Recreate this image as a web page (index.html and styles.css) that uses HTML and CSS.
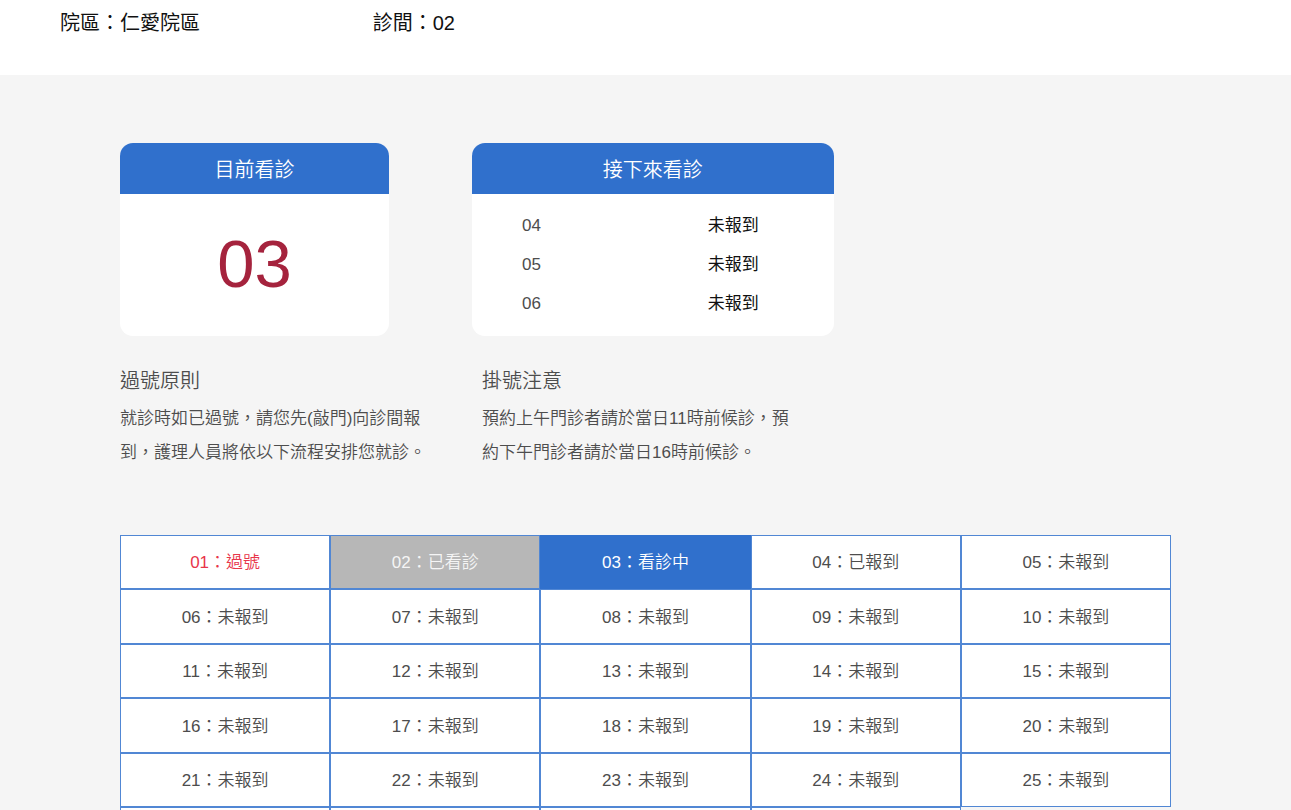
FILE: index.html
```
<!DOCTYPE html>
<html lang="zh-Hant-TW">
<head>
<meta charset="utf-8">
<meta name="viewport" content="width=device-width, initial-scale=1">
<title>看診進度</title>
<link rel="stylesheet" href="styles.css">
</head>
<body>
<header class="clinic-bar">
  <p class="clinic-item">院區：仁愛院區</p>
  <p class="clinic-item">診間：02</p>
</header>
<main class="content">
  <div class="cards">
    <section class="card">
      <h2 class="card-title">目前看診</h2>
      <p class="current-number">03</p>
    </section>
    <section class="card">
      <h2 class="card-title">接下來看診</h2>
      <table class="queue">
        <tbody>
          <tr><th scope="row">04</th><td>未報到</td></tr>
          <tr><th scope="row">05</th><td>未報到</td></tr>
          <tr><th scope="row">06</th><td>未報到</td></tr>
        </tbody>
      </table>
    </section>
  </div>
  <div class="notes">
    <section>
      <h3 class="note-title">過號原則</h3>
      <p class="note-text">就診時如已過號，請您先(敲門)向診間報到，護理人員將依以下流程安排您就診。</p>
    </section>
    <section>
      <h3 class="note-title">掛號注意</h3>
      <p class="note-text">預約上午門診者請於當日11時前候診，預約下午門診者請於當日16時前候診。</p>
    </section>
  </div>
  <ul class="slots">
    <li class="slot missed">01：過號</li>
    <li class="slot done">02：已看診</li>
    <li class="slot active">03：看診中</li>
    <li class="slot">04：已報到</li>
    <li class="slot">05：未報到</li>
    <li class="slot">06：未報到</li>
    <li class="slot">07：未報到</li>
    <li class="slot">08：未報到</li>
    <li class="slot">09：未報到</li>
    <li class="slot">10：未報到</li>
    <li class="slot">11：未報到</li>
    <li class="slot">12：未報到</li>
    <li class="slot">13：未報到</li>
    <li class="slot">14：未報到</li>
    <li class="slot">15：未報到</li>
    <li class="slot">16：未報到</li>
    <li class="slot">17：未報到</li>
    <li class="slot">18：未報到</li>
    <li class="slot">19：未報到</li>
    <li class="slot">20：未報到</li>
    <li class="slot">21：未報到</li>
    <li class="slot">22：未報到</li>
    <li class="slot">23：未報到</li>
    <li class="slot">24：未報到</li>
    <li class="slot">25：未報到</li>
    <li class="slot"></li>
    <li class="slot"></li>
    <li class="slot"></li>
    <li class="slot"></li>
  </ul>
</main>
</body>
</html>
```
FILE: styles.css
```
* {
  box-sizing: border-box;
}

body {
  margin: 0;
  background: #f5f5f5;
  color: #4d4d4d;
  font-family: "Liberation Sans", "Noto Sans CJK TC", sans-serif;
  font-size: 17px;
  line-height: 24px;
  font-weight: 350;
}

h2, h3, p, ul {
  margin: 0;
  padding: 0;
  font-weight: 350;
}

.clinic-bar {
  display: grid;
  grid-template-columns: 26.7% 1fr;
  padding: 8px 60px 37px;
  background: #fff;
  color: #111;
}

.clinic-item {
  font-size: 20px;
  line-height: 30px;
  font-weight: 400;
}

.content {
  padding: 68px 120px 60px;
}

.cards {
  display: grid;
  grid-template-columns: 25.6% 34.4%;
  column-gap: 7.9%;
}

.card {
  overflow: hidden;
  border-radius: 13px;
  background: #fff;
}

.card-title {
  padding: 12px 10px 8px;
  background: #3070cc;
  color: #fff;
  font-size: 20px;
  line-height: 31px;
  text-align: center;
}

.current-number {
  padding: 30px 0 32px;
  color: #a5233d;
  font-size: 67px;
  line-height: 80px;
  font-weight: 400;
  text-align: center;
}

.queue {
  width: 100%;
  margin-top: 12px;
  border-collapse: collapse;
}

.queue th,
.queue td {
  height: 39px;
  padding: 0;
  font-weight: 400;
  text-align: left;
}

.queue th {
  width: 65.2%;
  padding-left: 50px;
}

.queue td {
  color: #111;
}

.notes {
  display: grid;
  grid-template-columns: 29.7% 29.7%;
  column-gap: 4.75%;
  margin-top: 30px;
}

.note-title {
  font-size: 20px;
  line-height: 30px;
}

.note-text {
  margin-top: 6px;
  line-height: 34px;
}

.slots {
  display: grid;
  grid-template-columns: repeat(5, 1fr);
  margin-top: 65px;
  list-style: none;
}

.slot {
  display: flex;
  align-items: center;
  justify-content: center;
  aspect-ratio: 27 / 7;
  padding-top: 2px;
  border: 1px solid #5187d4;
  background: #fff;
}

.missed {
  color: #e8354a;
}

.done {
  background: #b7b7b7;
  color: #f5f5f5;
}

.active {
  border-color: #3070cc;
  background: #3070cc;
  color: #fff;
}
```
